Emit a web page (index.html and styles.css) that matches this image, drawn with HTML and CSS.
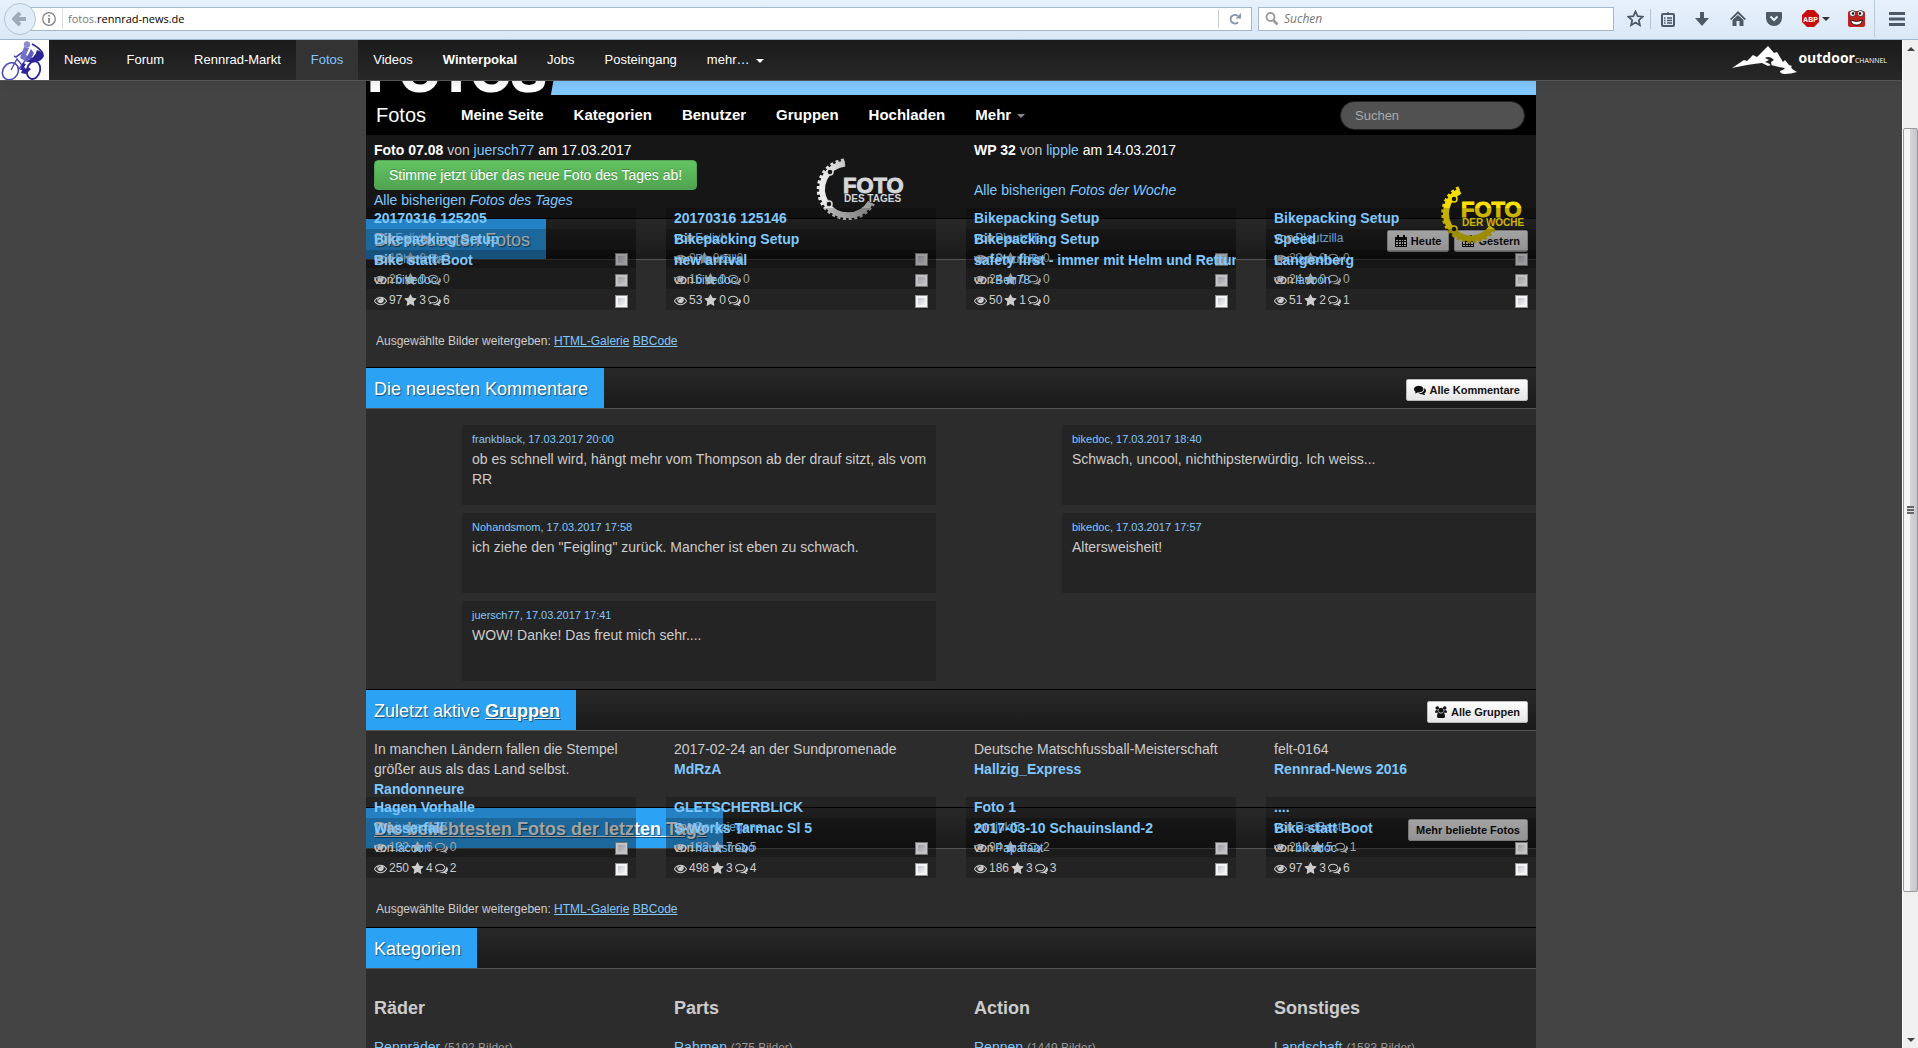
FILE: index.html
```html
<!DOCTYPE html>
<html lang="de">
<head>
<meta charset="utf-8">
<title>Fotos - Rennrad-News</title>
<link rel="stylesheet" href="styles.css">
</head>
<body>
<svg class="defs" aria-hidden="true">
  <symbol id="eye" viewBox="0 0 1792 1792"><path d="M1664 960q-152-236-381-353 61 104 61 225 0 185-131.500 316.500t-316.500 131.500-316.500-131.500-131.500-316.500q0-121 61-225-229 117-381 353 133 205 333.500 326.500t434.500 121.500 434.500-121.500 333.500-326.500zM944 576q0-20-14-34t-34-14q-125 0-214.500 89.500t-89.500 214.500q0 20 14 34t34 14 34-14 14-34q0-86 61-147t147-61q20 0 34-14t14-34zM1792 960q0 34-20 69-140 230-376.500 368.500t-499.500 138.500-499.500-139-376.500-368q-20-35-20-69t20-69q140-229 376.500-368t499.500-139 499.500 139 376.500 368q20 35 20 69z"/></symbol>
  <symbol id="star" viewBox="0 0 1792 1792"><path d="M1728 647q0 22-26 48l-363 354 86 500q1 7 1 20 0 21-10.500 35.500t-30.500 14.500q-19 0-40-12l-449-236-449 236q-22 12-40 12-21 0-31.500-14.500t-10.500-35.500q0-6 2-20l86-500-364-354q-25-27-25-48 0-37 56-46l502-73 225-455q19-41 49-41t49 41l225 455 502 73q56 9 56 46z"/></symbol>
  <symbol id="talk" viewBox="0 0 1792 1792"><path d="M704 384q-153 0-286 52t-211.500 141-78.500 191q0 82 53 158t149 132l97 56-35 84q34-20 62-39l44-31 53 10q78 14 153 14 153 0 286-52t211.500-141 78.500-191-78.500-191-211.500-141-286-52zM704 256q191 0 353.500 68.500t256.500 186.500 94 257-94 257-256.500 186.500-353.500 68.500q-86 0-176-16-124 88-278 128-36 9-86 16h-3q-11 0-20.500-8t-11.500-21q-1-3-1-6.500t.5-6.500 2-6l2.500-5 3.500-5.500 4-5 4.500-5 4-4.500q5-6 23-25t26-29.500 22.500-29 25-38.500 20.500-44q-124-72-195-177t-71-224q0-139 94-257t256.500-186.500 353.500-68.500zM1526 1425q10 24 20.500 44t25 38.500 22.500 29 26 29.500 23 25q1 1 4 4.500t4.500 5 4 5 3.500 5.500l2.500 5 2 6 .5 6.500-1 6.500q-3 14-13 22t-22 7q-50-7-86-16-154-40-278-128-90 16-176 16-271 0-472-132 58 4 88 4 161 0 309-45t264-129q125-92 192-212t67-254q0-77-23-152 129 71 204 178t75 230q0 120-71 224.500t-195 176.500z"/></symbol>
  <symbol id="talk-solid" viewBox="0 0 1792 1792"><path d="M704 256q191 0 353.500 68.500t256.500 186.500 94 257-94 257-256.500 186.500-353.500 68.500q-86 0-176-16-124 88-278 128-36 9-86 16-25 0-35-29 0-20 13-32 90-90 120-164-124-72-195-177t-71-224q0-139 94-257t256.500-186.500 353.500-68.500zM1526 1425q10 24 20.500 44t25 38.500 22.500 29 26 29.500 23 25q22 24 21 38-3 28-35 29-50-7-86-16-154-40-278-128-90 16-176 16-271 0-472-132 58 4 88 4 161 0 309-45t264-129q125-92 192-212t67-254q0-77-23-152 129 71 204 178t75 230q0 120-71 224.500t-195 176.500z"/></symbol>
  <symbol id="cal" viewBox="0 0 12 12"><path fill-rule="evenodd" d="M0 2h2V0h2v2h4V0h2v2h2v10H0zM1 5v1h2V5zM4 5v1h2V5zM7 5v1h1V5zM9 5v1h2V5zM1 7v2h2V7zM4 7v2h2V7zM7 7v2h1V7zM9 7v2h2V7zM1 10v1h2v-1zM4 10v1h2v-1zM7 10v1h1v-1zM9 10v1h2v-1z"/></symbol>
  <symbol id="group" viewBox="0 0 12 12"><circle cx="2.300" cy="2" r="1.800"/><circle cx="9.700" cy="2" r="1.800"/><circle cx="6" cy="4.300" r="2.500"/><path d="M0 6.500Q0 4 1.200 4q1.600.8 2 .3 0 1.700 1 2.500H1Q0 6.800 0 6.500zM12 6.500Q12 4 10.800 4q-1.600.8-2 .3 0 1.700-1 2.500H11q1 0 1-.3zM2 10.500Q2 7 3.800 6.800q2.200 1.400 4.400 0Q10 7 10 10.500q0 1.500-1.500 1.500h-5Q2 12 2 10.500z"/></symbol>
</svg>

<div class="browser">
  <button class="back" aria-label="Zurück"><svg width="16" height="16" viewBox="0 0 16 16"><path d="M8 2 2 8l6 6M3 8h11" fill="none" stroke="#9dabb8" stroke-width="4"/></svg></button>
  <div class="urlbar">
    <svg width="14" height="14" viewBox="0 0 14 14"><circle cx="7" cy="7" r="6.300" fill="none" stroke="#7c7c7c" stroke-width="1.200"/><path d="M6.200 3h1.600v1.600H6.200zM6.200 6h1.600v5H6.200z" fill="#7c7c7c"/></svg>
    <span class="url"><span class="sub">fotos.</span>rennrad-news.de</span>
    <button class="reload" aria-label="Neu laden"><svg width="12" height="12" viewBox="0 0 12 12"><path d="M9 9.200A4.300 4.300 0 1 1 8.800 3" fill="none" stroke="#8496a5" stroke-width="2"/><path d="M12 0v5.500H6.500z" fill="#8496a5"/></svg></button>
  </div>
  <div class="searchbar">
    <svg width="14" height="14" viewBox="0 0 14 14"><circle cx="5.500" cy="5" r="4" fill="none" stroke="#999" stroke-width="1.800"/><path d="M8.500 8.500l4 4" stroke="#999" stroke-width="2.500"/></svg>
    <input type="text" placeholder="Suchen" aria-label="Websuche">
  </div>
  <div class="tools">
    <button aria-label="Lesezeichen" class="tool-star"><svg width="17" height="17" viewBox="0 0 17 17"><path d="M8.500 1.500l2.100 4.700 5 .5-3.800 3.500 1.100 5-4.400-2.600-4.400 2.600 1.100-5L1.400 6.700l5-.5z" fill="none" stroke="#4d5a66" stroke-width="1.800"/></svg></button>
    <button aria-label="Leseliste" class="tool-list"><svg width="14" height="16" viewBox="0 0 14 16"><rect x="1" y="3" width="12" height="12" rx="1" fill="none" stroke="#4d5a66" stroke-width="2"/><path d="M4 4V2h2a1 1 0 0 1 2 0h2v2z" fill="#4d5a66"/><path d="M3 7h1.500M6 7h5M3 9.500h1.500M6 9.500h5M3 12h1.500M6 12h5" stroke="#4d5a66" stroke-width="1.500"/></svg></button>
    <button aria-label="Downloads"><svg width="14" height="14" viewBox="0 0 14 14"><path d="M5 0h4v6h5l-7 8-7-8h5z" fill="#4d5a66"/></svg></button>
    <button aria-label="Startseite"><svg width="16" height="15" viewBox="0 0 16 15"><path d="M8 0l8 8-1.500 1L8 2.800 1.500 9 0 8z" fill="#4d5a66"/><path d="M8 4l5.500 5v6h-4v-5h-3v5h-4V9z" fill="#4d5a66"/></svg></button>
    <button aria-label="Pocket"><svg width="16" height="14" viewBox="0 0 16 14"><path d="M1 0h14a1 1 0 0 1 1 1v5a8 8 0 0 1-16 0V1a1 1 0 0 1 1-1z" fill="#4d5a66"/><path d="M4.500 4.500L8 8l3.500-3.500" fill="none" stroke="#e8f0f8" stroke-width="2"/></svg></button>
    <button aria-label="Adblock Plus" class="abp"><svg width="17" height="17" viewBox="0 0 17 17"><path d="M5 0h7l5 5v7l-5 5H5l-5-5V5z" fill="#c70d0d"/><text x="8.500" y="11.500" text-anchor="middle" font-family="Liberation Sans" font-size="7" font-weight="700" fill="#fff">ABP</text></svg><span class="caret dark"></span></button>
    <button aria-label="Erweiterung"><svg width="17" height="17" viewBox="0 0 17 17"><rect y="1" width="17" height="16" rx="2" fill="#c2211f"/><circle cx="4.500" cy="3.500" r="3" fill="#fff" stroke="#222" stroke-width=".8"/><circle cx="12.500" cy="3.500" r="3" fill="#fff" stroke="#222" stroke-width=".8"/><circle cx="5" cy="3.500" r="1.200"/><circle cx="12" cy="3.500" r="1.200"/><path d="M2.500 10q6 3 12 0-1 5-6 5t-6-5z" fill="#fff" stroke="#222"/></svg></button>
    <button aria-label="Menü" class="menu"><svg width="16" height="14" viewBox="0 0 16 14"><path d="M0 1.500h16M0 7h16M0 12.500h16" stroke="#4d5a66" stroke-width="3"/></svg></button>
  </div>
</div>

<div class="window">
  <div class="viewport">
    <nav class="topnav">
      <a href="#" class="brandlogo" aria-label="Rennrad-News"><svg width="49" height="40" viewBox="0 0 49 40"><rect width="49" height="40" fill="#fff"/><g fill="none" stroke="#4a48b4"><ellipse cx="10.500" cy="31" rx="7.500" ry="9" stroke-width="1.600" transform="rotate(35 10 31)"/><ellipse cx="33.500" cy="30" rx="6.500" ry="9" stroke="#2c2496" stroke-width="1.800" transform="rotate(15 33 30)"/><path d="M11 30L17 19l8 10M19 29L27 18" stroke-width="1.300"/><path d="M23 12l-7 5-2-1" stroke-width="1.600"/><path d="M32 4q8 4 11 10" stroke="#2c2496" stroke-width="1.600"/></g><circle cx="27" cy="4.500" r="3.200" fill="#8f8dd4"/><path d="M24 7l5 1-3 7 4 2-5 4-5-3z" fill="#7472c6"/><path d="M31 9l3 4-3 6-6 2 2-4z" fill="#5d5bbd"/><path d="M37 10q7 2 7 6-2 5-8 6-7 1-11-1 10-2 12-11z" fill="#2c2496"/><path d="M23 23l3 1-4 6h-2zM31 23l-3 4 3 2-5 5-5-1 2-5 4 1z" fill="#2c2496"/></svg></a>
      <a href="#">News</a><a href="#">Forum</a><a href="#">Rennrad-Markt</a><a href="#" class="active">Fotos</a><a href="#">Videos</a><a href="#"><b>Winterpokal</b></a><a href="#">Jobs</a><a href="#">Posteingang</a><a href="#">mehr…<span class="caret"></span></a>
      <a href="#" class="outdoor"><svg width="66" height="28" viewBox="0 0 66 28"><path d="M0 22l12-8 3 1 6-6 4 2L36 0l6 7 3-1 6 10 2-2 4 5 3 1q-3 2 5 6-6 2-12 2-5 0-5-3 4-1 5-3l-6-1-8-2-3 1-6-3q-12 1-30 5z" fill="#fff"/><path d="M33 12q5-3 9 2l-3 2 1 5q-2-4-7-5l4-2z" fill="#222"/></svg><span class="od">outdoor</span><span class="ch">CHANNEL</span></a>
    </nav>

    <main class="page">
      <div class="banner"><span class="bannertext">FOTOS</span></div>
      <nav class="sitenav">
        <a href="#" class="brand">Fotos</a>
        <a href="#">Meine Seite</a><a href="#">Kategorien</a><a href="#">Benutzer</a><a href="#">Gruppen</a><a href="#">Hochladen</a><a href="#">Mehr<span class="caret grey"></span></a>
        <input type="search" placeholder="Suchen" aria-label="Suchen">
      </nav>

      <section class="best">
        <div>
          <p><b>Foto 07.08</b> <span class="by">von</span> <a href="#">juersch77</a> am 17.03.2017</p>
          <button class="vote">Stimme jetzt über das neue Foto des Tages ab!</button>
          <p><a href="#">Alle bisherigen <i>Fotos des Tages</i></a></p>
          <svg class="gear day" width="90" height="62" viewBox="0 0 90 62">
            <defs><linearGradient id="silver"><stop offset="0" stop-color="#eee"/><stop offset="1" stop-color="#999"/></linearGradient></defs>
            <g fill="none" stroke="url(#silver)"><path d="M29 5.500a26 26 0 1 0 25.500 39" stroke-width="6"/><path d="M28 2.500a29 29 0 1 0 29 43" stroke-width="4" stroke-dasharray="3 2.500"/></g>
            <circle cx="14" cy="14" r="3" fill="#161616" stroke="#ddd" stroke-width="1.500"/><circle cx="13" cy="46" r="3" fill="#161616" stroke="#ddd" stroke-width="1.500"/>
            <text x="27" y="35" font-size="22" class="geartext silver heavy">FOTO</text><text x="28" y="44" font-size="10" class="geartext silver">DES TAGES</text>
          </svg>
        </div>
        <div>
          <p><b>WP 32</b> <span class="by">von</span> <a href="#">lipple</a> am 14.03.2017</p>
          <p class="lower"><a href="#">Alle bisherigen <i>Fotos der Woche</i></a></p>
          <svg class="gear week" width="86" height="60" viewBox="0 0 86 60">
            <g fill="none" stroke="#f5dc00"><path d="M20 6a25 25 0 1 0 32 36" stroke-width="6"/><path d="M19 3a28 28 0 1 0 36 40" stroke-width="4" stroke-dasharray="3 2.500"/></g>
            <circle cx="14" cy="14" r="3" fill="#161616" stroke="#f5dc00" stroke-width="1.500"/><circle cx="14" cy="44" r="3" fill="#222" stroke="#f5dc00" stroke-width="1.500"/>
            <text x="21" y="32" font-size="22" class="geartext gold heavy">FOTO</text><text x="22" y="41" font-size="10" class="geartext gold">DER WOCHE</text>
          </svg>
        </div>
      </section>

      <header class="bar"><h2>Die neuesten Fotos</h2><div class="actions"><a href="#" class="btn"><svg class="ic"><use href="#cal"/></svg>Heute</a><a href="#" class="btn"><svg class="ic"><use href="#cal"/></svg>Gestern</a></div></header>
      <div class="tiles">
        <article class="tile"><h4><a href="#">20170316 125205</a></h4><p>von <a href="#">Felixh</a></p><p><svg class="ic"><use href="#eye"/></svg>18<svg class="ic"><use href="#star"/></svg>0<svg class="ic"><use href="#talk"/></svg>0<input type="checkbox" aria-label="20170316 125205 auswählen"></p></article>
        <article class="tile"><h4><a href="#">20170316 125146</a></h4><p>von <a href="#">Felixh</a></p><p><svg class="ic"><use href="#eye"/></svg>9<svg class="ic"><use href="#star"/></svg>0<svg class="ic"><use href="#talk"/></svg>0<input type="checkbox" aria-label="20170316 125146 auswählen"></p></article>
        <article class="tile"><h4><a href="#">Bikepacking Setup</a></h4><p>von <a href="#">Plautzilla</a></p><p><svg class="ic"><use href="#eye"/></svg>18<svg class="ic"><use href="#star"/></svg>0<svg class="ic"><use href="#talk"/></svg>0<input type="checkbox" aria-label="Bikepacking Setup auswählen"></p></article>
        <article class="tile"><h4><a href="#">Bikepacking Setup</a></h4><p>von <a href="#">Plautzilla</a></p><p><svg class="ic"><use href="#eye"/></svg>22<svg class="ic"><use href="#star"/></svg>0<svg class="ic"><use href="#talk"/></svg>0<input type="checkbox" aria-label="Bikepacking Setup auswählen"></p></article>
        <article class="tile"><h4><a href="#">Bikepacking Setup</a></h4><p>von <a href="#">Plautzilla</a></p><p><svg class="ic"><use href="#eye"/></svg>26<svg class="ic"><use href="#star"/></svg>0<svg class="ic"><use href="#talk"/></svg>0<input type="checkbox" aria-label="Bikepacking Setup auswählen"></p></article>
        <article class="tile"><h4><a href="#">Bikepacking Setup</a></h4><p>von <a href="#">Plautzilla</a></p><p><svg class="ic"><use href="#eye"/></svg>16<svg class="ic"><use href="#star"/></svg>0<svg class="ic"><use href="#talk"/></svg>0<input type="checkbox" aria-label="Bikepacking Setup auswählen"></p></article>
        <article class="tile"><h4><a href="#">Bikepacking Setup</a></h4><p>von <a href="#">Plautzilla</a></p><p><svg class="ic"><use href="#eye"/></svg>24<svg class="ic"><use href="#star"/></svg>0<svg class="ic"><use href="#talk"/></svg>0<input type="checkbox" aria-label="Bikepacking Setup auswählen"></p></article>
        <article class="tile"><h4><a href="#">Speed</a></h4><p>von <a href="#">lacoon</a></p><p><svg class="ic"><use href="#eye"/></svg>24<svg class="ic"><use href="#star"/></svg>0<svg class="ic"><use href="#talk"/></svg>0<input type="checkbox" aria-label="Speed auswählen"></p></article>
        <article class="tile"><h4><a href="#">Bike statt Boot</a></h4><p>von <a href="#">bikedoc</a></p><p><svg class="ic"><use href="#eye"/></svg>97<svg class="ic"><use href="#star"/></svg>3<svg class="ic"><use href="#talk"/></svg>6<input type="checkbox" aria-label="Bike statt Boot auswählen"></p></article>
        <article class="tile"><h4><a href="#">new arrival</a></h4><p>von <a href="#">bikedoc</a></p><p><svg class="ic"><use href="#eye"/></svg>53<svg class="ic"><use href="#star"/></svg>0<svg class="ic"><use href="#talk"/></svg>0<input type="checkbox" aria-label="new arrival auswählen"></p></article>
        <article class="tile"><h4><a href="#">safety first - immer mit Helm und Rettungsdecke</a></h4><p>von <a href="#">Ben78</a></p><p><svg class="ic"><use href="#eye"/></svg>50<svg class="ic"><use href="#star"/></svg>1<svg class="ic"><use href="#talk"/></svg>0<input type="checkbox" aria-label="safety first auswählen"></p></article>
        <article class="tile"><h4><a href="#">Langenberg</a></h4><p>von <a href="#">lacoon</a></p><p><svg class="ic"><use href="#eye"/></svg>51<svg class="ic"><use href="#star"/></svg>2<svg class="ic"><use href="#talk"/></svg>1<input type="checkbox" aria-label="Langenberg auswählen"></p></article>
      </div>
      <p class="share">Ausgewählte Bilder weitergeben: <a href="#">HTML-Galerie</a> <a href="#">BBCode</a></p>

      <header class="bar spaced"><h2>Die neuesten Kommentare</h2><div class="actions"><a href="#" class="btn"><svg class="ic"><use href="#talk-solid"/></svg>Alle Kommentare</a></div></header>
      <div class="comments">
        <article><a href="#">frankblack, 17.03.2017 20:00</a><p>ob es schnell wird, hängt mehr vom Thompson ab der drauf sitzt, als vom RR</p></article>
        <article><a href="#">bikedoc, 17.03.2017 18:40</a><p>Schwach, uncool, nichthipsterwürdig. Ich weiss...</p></article>
        <article><a href="#">Nohandsmom, 17.03.2017 17:58</a><p>ich ziehe den "Feigling" zurück. Mancher ist eben zu schwach.</p></article>
        <article><a href="#">bikedoc, 17.03.2017 17:57</a><p>Altersweisheit!</p></article>
        <article><a href="#">juersch77, 17.03.2017 17:41</a><p>WOW! Danke! Das freut mich sehr....</p></article>
      </div>

      <header class="bar"><h2>Zuletzt aktive <a href="#">Gruppen</a></h2><div class="actions"><a href="#" class="btn"><svg class="ic"><use href="#group"/></svg>Alle Gruppen</a></div></header>
      <div class="groups">
        <p>In manchen Ländern fallen die Stempel größer aus als das Land selbst.<br><a href="#">Randonneure</a></p>
        <p>2017-02-24 an der Sundpromenade<br><a href="#">MdRzA</a></p>
        <p>Deutsche Matschfussball-Meisterschaft<br><a href="#">Hallzig_Express</a></p>
        <p>felt-0164<br><a href="#">Rennrad-News 2016</a></p>
      </div>

      <header class="bar"><h2><a href="#">Die beliebtesten Fotos der letzten Tage</a></h2><div class="actions"><a href="#" class="btn">Mehr beliebte Fotos</a></div></header>
      <div class="tiles">
        <article class="tile"><h4><a href="#">Hagen Vorhalle</a></h4><p>von <a href="#">juersch77</a></p><p><svg class="ic"><use href="#eye"/></svg>132<svg class="ic"><use href="#star"/></svg>6<svg class="ic"><use href="#talk"/></svg>0<input type="checkbox" aria-label="Hagen Vorhalle auswählen"></p></article>
        <article class="tile"><h4><a href="#">GLETSCHERBLICK</a></h4><p>von <a href="#">Bergziegene</a></p><p><svg class="ic"><use href="#eye"/></svg>182<svg class="ic"><use href="#star"/></svg>7<svg class="ic"><use href="#talk"/></svg>5<input type="checkbox" aria-label="GLETSCHERBLICK auswählen"></p></article>
        <article class="tile"><h4><a href="#">Foto 1</a></h4><p>von <a href="#">juki5</a></p><p><svg class="ic"><use href="#eye"/></svg>94<svg class="ic"><use href="#star"/></svg>6<svg class="ic"><use href="#talk"/></svg>2<input type="checkbox" aria-label="Foto 1 auswählen"></p></article>
        <article class="tile"><h4><a href="#">....</a></h4><p>von <a href="#">RadBasti</a></p><p><svg class="ic"><use href="#eye"/></svg>210<svg class="ic"><use href="#star"/></svg>5<svg class="ic"><use href="#talk"/></svg>1<input type="checkbox" aria-label="Foto auswählen"></p></article>
        <article class="tile"><h4><a href="#">Wasserfall</a></h4><p>von <a href="#">lacoon</a></p><p><svg class="ic"><use href="#eye"/></svg>250<svg class="ic"><use href="#star"/></svg>4<svg class="ic"><use href="#talk"/></svg>2<input type="checkbox" aria-label="Wasserfall auswählen"></p></article>
        <article class="tile"><h4><a href="#">S-Works Tarmac Sl 5</a></h4><p>von <a href="#">haukstrebo</a></p><p><svg class="ic"><use href="#eye"/></svg>498<svg class="ic"><use href="#star"/></svg>3<svg class="ic"><use href="#talk"/></svg>4<input type="checkbox" aria-label="S-Works Tarmac auswählen"></p></article>
        <article class="tile"><h4><a href="#">2017-03-10 Schauinsland-2</a></h4><p>von <a href="#">Papafant</a></p><p><svg class="ic"><use href="#eye"/></svg>186<svg class="ic"><use href="#star"/></svg>3<svg class="ic"><use href="#talk"/></svg>3<input type="checkbox" aria-label="Schauinsland auswählen"></p></article>
        <article class="tile"><h4><a href="#">Bike statt Boot</a></h4><p>von <a href="#">bikedoc</a></p><p><svg class="ic"><use href="#eye"/></svg>97<svg class="ic"><use href="#star"/></svg>3<svg class="ic"><use href="#talk"/></svg>6<input type="checkbox" aria-label="Bike statt Boot auswählen"></p></article>
      </div>
      <p class="share">Ausgewählte Bilder weitergeben: <a href="#">HTML-Galerie</a> <a href="#">BBCode</a></p>

      <header class="bar"><h2>Kategorien</h2></header>
      <div class="cats">
        <div><h3>Räder</h3><a href="#">Rennräder</a> <small>(5192 Bilder)</small></div>
        <div><h3>Parts</h3><a href="#">Rahmen</a> <small>(275 Bilder)</small></div>
        <div><h3>Action</h3><a href="#">Rennen</a> <small>(1449 Bilder)</small></div>
        <div><h3>Sonstiges</h3><a href="#">Landschaft</a> <small>(1583 Bilder)</small></div>
      </div>
    </main>
  </div>
  <div class="scrollbar" aria-hidden="true">
    <span class="arrow up"></span>
    <div class="above"></div>
    <div class="thumb"><span class="grip"></span></div>
    <div class="below"></div>
    <span class="arrow down"></span>
  </div>
</div>
</body>
</html>
```
FILE: styles.css
```css
* { box-sizing: border-box; }
body {
  margin: 0;
  height: 100vh;
  overflow: hidden;
  display: flex;
  flex-direction: column;
  background: #444;
  color: #ccc;
  font: 14px/20px "Liberation Sans", Arial, sans-serif;
}
p, h2, h3, h4 { margin: 0; }
a { color: #80c8ff; text-decoration: none; }
button { font: inherit; }
.defs { display: none; }
svg { flex: none; }

/* browser toolbar */
.browser {
  flex: none;
  display: flex;
  align-items: center;
  height: 40px;
  padding: 0 12px 2px 4px;
  background: linear-gradient(#e7f1fc, #dae8f6);
  border-bottom: 1px solid #9fb7cd;
  font: 12px/20px "Open Sans", "Noto Sans", sans-serif;
  color: #000;
}
.browser button {
  display: flex;
  align-items: center;
  justify-content: center;
  padding: 0;
  border: 0;
  background: none;
}
.browser .back {
  position: relative;
  flex: none;
  width: 32px;
  height: 32px;
  border: 1px solid #b4c4d4;
  border-radius: 50%;
  background: #e0ecf8;
}
.urlbar, .searchbar {
  display: flex;
  align-items: center;
  height: 24px;
  background: #fff;
  border: 1px solid #a5b8cb;
}
.urlbar { flex: 1; margin-left: -6px; padding-left: 11px; }
.url { flex: 1; margin-left: 6px; padding-left: 5px; border-left: 1px solid #ddd; font-size: 11px; }
.sub { color: #777; }
.browser .reload { width: 33px; height: 18px; border-left: 1px solid #ccc; }
.searchbar { width: 356px; margin-left: 6px; padding-left: 6px; gap: 5px; }
.searchbar input { flex: 1; border: 0; padding: 0; background: none; outline: 0; font: italic 12px/20px "Open Sans", sans-serif; }
.searchbar input::placeholder { color: #777; opacity: 1; }
.tools { display: flex; align-items: center; margin-left: 6px; }
.tools button { width: 36px; height: 20px; }
.browser .tool-star { width: 31px; border-right: 1px solid #b5c3d0; }
.browser .tool-list { width: 33px; }
.browser .abp { width: 46px; justify-content: flex-start; padding-left: 10px; gap: 3px; }
.browser .menu { width: 44px; height: 38px; border-left: 1px solid #bccbda; margin-right: -12px; }

.caret {
  display: inline-block;
  margin-left: 7px;
  border: 4px solid transparent;
  border-top-color: #fff;
  border-bottom: 0;
  vertical-align: middle;
}
.caret.grey { border-top-color: #888; margin-left: 6px; }
.caret.dark { border-top-color: #333; margin: 0; }

/* page window and scrollbar */
.window { flex: 1; min-height: 0; display: flex; }
.viewport { flex: 1; min-width: 0; overflow: hidden; }
.scrollbar {
  width: 16px;
  display: flex;
  flex-direction: column;
  align-items: center;
  background: #f0f0f0;
  border-left: 1px solid #fff;
}
.arrow { flex: none; height: 17px; display: flex; align-items: center; }
.arrow::before { content: ""; border: 4px solid transparent; }
.arrow.up::before { border-bottom-color: #444; border-top: 0; }
.arrow.down::before { border-top-color: #444; border-bottom: 0; }
.above { flex: 71; }
.below { flex: 139; }
.thumb {
  flex: 764;
  align-self: stretch;
  display: flex;
  align-items: center;
  justify-content: center;
  border: 1px solid #999;
  border-radius: 2px;
  background: linear-gradient(90deg, #f6f6f6 45%, #d6d6da 50%, #c4c4ca);
}
.grip { width: 7px; height: 8px; background: repeating-linear-gradient(#666 0 2px, #ddd 2px 3px); }

.topnav {
  position: relative;
  display: flex;
  height: 41px;
  background: linear-gradient(#1b1b1b, #272727);
  border-bottom: 1px solid #555;
  box-shadow: 0 1px 10px rgba(0, 0, 0, .1);
  font-size: 13px;
}
.topnav a { padding: 10px 15px; color: #fff; white-space: nowrap; }
.topnav .brandlogo { padding: 0; width: 49px; }
.topnav .active { background: #333; color: #80c8ff; }
.topnav .outdoor {
  display: flex;
  align-items: flex-start;
  margin-left: auto;
  padding: 6px 15px 0 0;
  font-family: "Open Sans", sans-serif;
}
.od { font-size: 14px; font-weight: 700; line-height: 24px; }
.ch { font-size: 7px; line-height: 30px; }

.page { max-width: 1170px; margin: 0 auto; background: #2c2c2c; }
.banner {
  display: flex;
  align-items: flex-end;
  height: 14px;
  overflow: hidden;
  background: linear-gradient(100deg, #000 184px, #80c8ff 185px);
}
.bannertext {
  margin-left: 2px;
  font-size: 52px;
  line-height: 44px;
  font-weight: 700;
  color: #fff;
  -webkit-text-stroke: 2px #fff;
}
.sitenav { display: flex; align-items: center; height: 40px; background: #000; font-size: 15px; font-weight: 700; }
.sitenav a { padding: 10px 15px; color: #fff; }
.sitenav .brand { padding: 10px 20px 10px 10px; font-size: 20px; font-weight: 400; }
.sitenav input {
  margin-left: auto;
  margin-right: 11px;
  width: 185px;
  height: 29px;
  padding: 0 14px;
  border: 1px solid #222;
  border-radius: 15px;
  background: #515151;
  color: #ccc;
  font: 13px/20px "Liberation Sans", sans-serif;
}
.sitenav input::placeholder { color: #aaa; opacity: 1; }

.best { display: grid; grid-template-columns: 1fr 1fr; gap: 30px; padding: 5px 0 8px; background: #161616; color: #fff; }
.best > div { position: relative; padding-left: 8px; }
.by { color: #ccc; }
.best .lower { margin-top: 20px; }
.vote {
  display: block;
  height: 30px;
  padding: 0 14px;
  border: 1px solid #51a351;
  border-radius: 4px;
  background: linear-gradient(#62c462, #51a351);
  color: #fff;
  text-shadow: 0 -1px 0 rgba(0, 0, 0, .25);
}
.gear { position: absolute; }
.gear.day { top: 18px; right: 30px; }
.gear.week { top: 45px; right: 10px; }
.geartext { font-family: "Liberation Sans", sans-serif; font-weight: 700; }
.silver { fill: #d4d6d8; stroke: #d4d6d8; stroke-width: 0; }
.gold { fill: #ffe100; stroke: #ffe100; stroke-width: 0; }
.heavy { stroke-width: 1px; }

.bar {
  display: flex;
  align-items: center;
  justify-content: space-between;
  height: 42px;
  border-top: 1px solid #000;
  border-bottom: 1px solid #555;
  background: linear-gradient(#282828, #1a1a1a);
}
.bar h2 {
  padding: 2px 16px 0 8px;
  font-size: 18px;
  line-height: 38px;
  font-weight: 400;
  color: #fff;
  background: #2ca2f5;
  text-shadow: 1px 1px 1px rgba(0, 0, 0, .5);
}
.bar h2 a { color: #fff; font-weight: 700; text-decoration: underline; }
.actions { display: flex; gap: 5px; margin: 3px 8px 0 0; }
.btn {
  display: flex;
  align-items: center;
  gap: 4px;
  height: 22px;
  padding: 0 7px;
  border: 1px solid #bbb;
  border-radius: 2px;
  background: linear-gradient(#fff, #e6e6e6);
  color: #111;
  font-size: 11px;
  font-weight: 700;
}
.ic { width: 12px; height: 12px; fill: currentColor; }

/* photo tiles stack over the section bar above them */
.tiles { display: grid; grid-template-columns: repeat(4, minmax(0, 1fr)); grid-auto-rows: 21px; column-gap: 30px; margin-top: -52px; padding-bottom: 39px; }
.tile { position: relative; height: 60px; padding: 0 8px; overflow: hidden; background: rgba(0, 0, 0, .2); }
.tile h4 { font-size: 14px; line-height: 20px; white-space: nowrap; }
.tile p { display: flex; align-items: center; gap: 2px; height: 20px; font-size: 12px; }
.tile .ic { width: 13px; height: 13px; }
.tile input {
  appearance: none;
  width: 13px;
  height: 13px;
  margin: 2px 0 0 auto;
  border: 1px solid #8e8f8f;
  background: linear-gradient(135deg, #b8bcc6, #fff);
  box-shadow: inset 0 0 0 2px #f4f4f4;
}
.share { padding: 21px 10px 8px; font-size: 12px; }
.share a { text-decoration: underline; }
.bar.spaced { margin-top: 8px; }

.comments { display: grid; grid-template-columns: 1fr 1fr; gap: 8px 30px; padding: 16px 0 8px; }
.comments article { min-height: 80px; margin-left: 96px; padding: 4px 0 4px 10px; background: #242424; }
.comments a { display: block; font-size: 11px; }

.groups, .cats { display: grid; grid-template-columns: repeat(4, minmax(0, 1fr)); gap: 30px; }
.groups { padding: 8px 0; }
.groups p, .cats > div { padding-left: 8px; }
.groups a { font-weight: 700; }
.cats { padding-top: 29px; }
.cats h3 { margin-bottom: 19px; font-size: 18px; }
.cats small { font-size: 12px; color: #999; }
```
